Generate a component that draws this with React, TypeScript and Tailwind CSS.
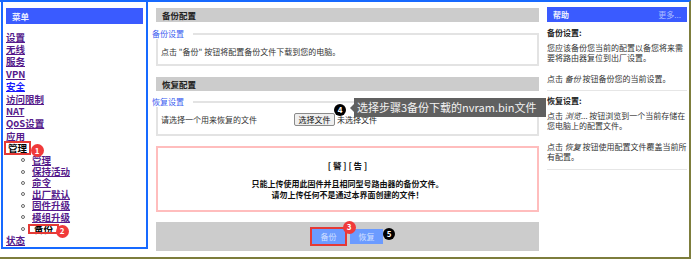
import React from 'react';

const topMenu: [string, boolean][] = [
    ['设置', false],
    ['无线', false],
    ['服务', false],
    ['VPN', false],
    ['安全', true],
    ['访问限制', false],
    ['NAT', false],
    ['QoS设置', false],
    ['应用', false],
];

const subMenu = ['管理', '保持活动', '命令', '出厂默认', '固件升级', '模组升级'];

function MenuLink({ label, fresh }: { label: string; fresh?: boolean }) {
    return (
        <div className="leading-[12.4px]">
            <a className={fresh ? 'font-bold underline text-[#1a1aff]' : 'font-bold underline text-[#551a8b]'}>{label}</a>
        </div>
    );
}

function SubLink({ children }: { children: React.ReactNode }) {
    return (
        <div className="flex h-[11.4px] items-center leading-[11.4px]">
            <span className="ml-[15px] mr-[7px] h-[4px] w-[4px] rounded-full border border-[#666]" />
            {children}
        </div>
    );
}

function Badge({ n, dark, className }: { n: string; dark?: boolean; className: string }) {
    return (
        <span
            className={`absolute flex items-center justify-center rounded-full font-bold text-white text-[8px] leading-none ${dark ? 'h-[12px] w-[12px] bg-black' : 'h-[13px] w-[13px] bg-[#f03a3a]'} ${className}`}
        >
            {n}
        </span>
    );
}

function SectionHead({ title }: { title: string }) {
    return <div className="h-[14px] bg-[#cccccc] pl-[6px] text-[8.5px] font-bold leading-[14px] text-[#222]">{title}</div>;
}

export default function App() {
    return (
        <div className="relative h-[259px] w-[691px] overflow-hidden border-t-2 border-r-2 border-b-2 border-t-[#1769ff] border-r-[#7d7d3c] border-b-[#7d7d3c] bg-white font-['Noto_Sans_CJK_SC',sans-serif] text-[8px] text-[#333]">
            <div className="flex items-start">
                {/* sidebar */}
                <div className="ml-[1px] h-[247px] w-[147px] border-x-2 border-b-2 border-[#1769ff] pt-[6px]">
                    <div className="mx-[3px] h-[16px] bg-[#3a5bff] pl-[6px] text-[8.5px] font-bold leading-[16px] text-[#e8ecff]">菜单</div>
                    <div className="mt-[6.5px] pl-[3px] text-[9.5px]">
                        {topMenu.map(([label, fresh]) => (
                            <MenuLink key={label} label={label} fresh={fresh} />
                        ))}
                        <div className="flex h-[12.4px] items-center">
                            <span className="block h-[10px] bg-white px-[2px] font-bold leading-[10px] text-black outline-2 outline-solid outline-[#e53935]">管理</span>
                        </div>
                        {subMenu.map((s) => (
                            <SubLink key={s}>
                                <a className="font-bold underline text-[#551a8b]">{s}</a>
                            </SubLink>
                        ))}
                        <SubLink>
                            <span className="-ml-[2px] block h-[6px] bg-white px-[4px] font-bold leading-[6px] text-black outline-2 outline-solid outline-[#e53935]">备份</span>
                        </SubLink>
                        <MenuLink label="状态" />
                    </div>
                </div>

                {/* main */}
                <div className="mt-[6px] ml-[8px] w-[383px]">
                    <SectionHead title="备份配置" />
                    <fieldset className="mt-[7px] border-2 border-[#e3e3e3] pb-[7px] pt-[8px]">
                        <legend className="-ml-[6px] pr-[9px] leading-[10px] text-[#3a5cf0]">备份设置</legend>
                        <div className="pl-[3px] leading-[10px]">点击 "备份" 按钮将配置备份文件下载到您的电脑。</div>
                    </fieldset>

                    <div className="mt-[11px]">
                        <SectionHead title="恢复配置" />
                    </div>
                    <fieldset className="mt-[6px] border-2 border-[#e3e3e3] pb-[8px] pt-[6px]">
                        <legend className="-ml-[6px] pr-[9px] leading-[10px] text-[#3a5cf0]">恢复设置</legend>
                        <div className="flex h-[13px] items-center pl-[3px]">
                            <span className="w-[133px] leading-[10px]">请选择一个用来恢复的文件</span>
                            <button className="h-[13px] w-[41px] rounded-[2px] border border-[#8a8a8a] bg-[#efefef] text-[8px] leading-[11px] text-[#111]">选择文件</button>
                            <span className="ml-[2px] leading-[10px] text-[#222]">未选择文件</span>
                        </div>
                    </fieldset>

                    <div className="mt-[10px] flex h-[66px] flex-col items-center border-2 border-[#ffbdbd] pt-[12px] font-bold text-[#111]">
                        <div className="text-[8.5px] leading-[10px]">[ 警 ] [ 告 ]</div>
                        <div className="mt-[7.5px] leading-[11px]">只能上传使用此固件并且相同型号路由器的备份文件。</div>
                        <div className="leading-[11px]">请勿上传任何不是通过本界面创建的文件！</div>
                    </div>

                    <div className="mt-[10px] flex h-[29px] items-center justify-center gap-[5px] bg-[#cccccc]">
                        <button className="h-[15px] w-[33px] bg-[#6b9bff] text-[8px] text-[#d2e0ff] outline-2 outline-solid outline-[#e53935]">备份</button>
                        <button className="h-[15px] w-[33px] bg-[#6b9bff] text-[8px] text-[#d2e0ff]">恢复</button>
                    </div>
                </div>

                {/* help */}
                <div className="mt-[5px] ml-[8px] w-[140px] leading-[10.5px]">
                    <div className="flex h-[15px] items-center justify-between bg-[#3a5bff] px-[6px] leading-[15px]">
                        <span className="font-bold text-[#eef1ff]">帮助</span>
                        <span className="text-[#a9bcff]">更多...</span>
                    </div>
                    <div className="mt-[6px] font-bold text-[#222]">备份设置:</div>
                    <p className="mt-[4px]">您应该备份您当前的配置以备您将来需要将路由器复位到出厂设置。</p>
                    <p className="mt-[10px]">
                        点击 <i>备份</i> 按钮备份您的当前设置。
                    </p>
                    <div className="mt-[5.5px] h-px bg-[#e6e6e6]" />
                    <div className="mt-[5.5px] font-bold text-[#222]">恢复设置:</div>
                    <p className="mt-[4px]">
                        点击 <i>浏览...</i> 按钮浏览到一个当前存储在您电脑上的配置文件。
                    </p>
                    <p className="mt-[10px]">
                        点击 <i>恢复</i> 按钮使用配置文件覆盖当前所有配置。
                    </p>
                    <div className="mt-[6.5px] h-px bg-[#e6e6e6]" />
                </div>
            </div>

            {/* annotations */}
            <div className="absolute left-[354px] top-[96px] h-[19px] whitespace-nowrap bg-[#606060] pl-[3px] pr-[9px] text-[11px] leading-[19px] text-[#f2f2f2]">
                <span className="absolute -left-[4px] top-[6px] h-0 w-0 border-y-[4px] border-r-[4px] border-y-transparent border-r-[#606060]" />
                选择步骤3备份下载的nvram.bin文件
            </div>
            <Badge n="1" className="left-[30.5px] top-[142px]" />
            <Badge n="2" className="left-[55.5px] top-[222.5px]" />
            <Badge n="3" className="left-[342.5px] top-[218.5px]" />
            <Badge n="4" dark className="left-[334px] top-[102px]" />
            <Badge n="5" dark className="left-[383px] top-[226px]" />
        </div>
    );
}
